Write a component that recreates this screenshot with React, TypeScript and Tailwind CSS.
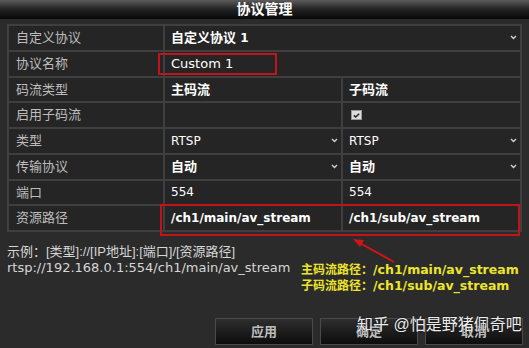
import React from 'react';

const cjk = '"Liberation Sans", "Noto Sans CJK SC", sans-serif';
const wide = '"DejaVu Sans", "Noto Sans CJK SC", sans-serif';

function Chevron() {
  return (
    <svg width="7" height="5" viewBox="0 0 7 5" className="shrink-0">
      <polyline points="1,1 3.5,3.5 6,1" fill="none" stroke="#d0d0d0" strokeWidth="1.4" />
    </svg>
  );
}

function Label({ children }: { children: React.ReactNode }) {
  return <div className="bg-[#252525] flex items-center pl-[7px] text-[13px] text-[#bdbdbd]">{children}</div>;
}

function Value({ children, chevron, span }: { children?: React.ReactNode; chevron?: boolean; span?: boolean }) {
  return (
    <div
      className={`bg-[#252525] flex items-center justify-between pl-[6px] pr-[3px] text-[12px] font-bold text-white ${span ? 'col-span-2' : ''}`}
      style={{ fontFamily: wide }}
    >
      <span>{children}</span>
      {chevron && <Chevron />}
    </div>
  );
}

function Cn({ children }: { children: React.ReactNode }) {
  return <span className="text-[13px]">{children}</span>;
}

function Checkbox() {
  return (
    <div className="w-[11px] h-[10px] bg-[#dcdcdc] border border-[#999] flex items-center justify-center">
      <svg width="7" height="5" viewBox="0 0 7 5">
        <polyline points="0.8,2.4 2.7,4 6.2,0.8" fill="none" stroke="#222" strokeWidth="1.5" />
      </svg>
    </div>
  );
}

function Button({ children }: { children: React.ReactNode }) {
  return (
    <div className="w-[98px] h-[27px] flex items-center justify-center border border-[#4a4a4a] bg-gradient-to-b from-[#2e2e2e] to-[#0d0d0d] text-[13px] text-[#bcbcbc] font-bold">
      {children}
    </div>
  );
}

export default function App() {
  return (
    <div className="relative w-[529px] h-[348px] bg-[#2b2b2b] overflow-hidden" style={{ fontFamily: cjk }}>
      <div className="h-[19px] bg-gradient-to-b from-[#5c5c5c] via-[#222] to-[#080808] flex items-center justify-center text-[14px] font-bold text-white">
        协议管理
      </div>

      <div className="mt-[5px] ml-[7px] w-[515px] grid grid-cols-[154px_176px_177px] auto-rows-[23.75px] gap-[2px] p-[2px] bg-[#3f3f3f]">
        <Label>自定义协议</Label>
        <Value span chevron>
          <Cn>自定义协议</Cn> 1
        </Value>
        <Label>协议名称</Label>
        <Value span>
          <span className="font-normal text-[13px]" style={{ fontFamily: wide }}>Custom 1</span>
        </Value>
        <Label>码流类型</Label>
        <Value>
          <Cn>主码流</Cn>
        </Value>
        <Value>
          <Cn>子码流</Cn>
        </Value>
        <Label>启用子码流</Label>
        <Value />
        <div className="bg-[#252525] flex items-center pl-[8px]">
          <Checkbox />
        </div>
        <Label>类型</Label>
        <Value chevron>
          <span className="font-normal">RTSP</span>
        </Value>
        <Value chevron>
          <span className="font-normal">RTSP</span>
        </Value>
        <Label>传输协议</Label>
        <Value chevron>
          <Cn>自动</Cn>
        </Value>
        <Value chevron>
          <Cn>自动</Cn>
        </Value>
        <Label>端口</Label>
        <Value>
          <span className="font-normal">554</span>
        </Value>
        <Value>
          <span className="font-normal">554</span>
        </Value>
        <Label>资源路径</Label>
        <Value>/ch1/main/av_stream</Value>
        <Value>/ch1/sub/av_stream</Value>
      </div>

      <div className="flex mt-[12px] ml-[7px]">
        <div className="w-[294px] shrink-0 text-[13px] leading-[16px] text-[#d6d6d6]">
          <div>示例：[类型]://[IP地址]:[端口]/[资源路径]</div>
          <div className="text-[13px]" style={{ fontFamily: wide }}>
            rtsp://192.168.0.1:554/ch1/main/av_stream
          </div>
        </div>
        <div className="mt-[18px] text-[12.5px] leading-[15px] font-bold text-[#ece52c]" style={{ fontFamily: wide }}>
          <div>
            <span className="text-[12px]">主码流路径：</span>/ch1/main/av_stream
          </div>
          <div>
            <span className="text-[12px]">子码流路径：</span>/ch1/sub/av_stream
          </div>
        </div>
      </div>

      <div className="absolute left-[215px] top-[318px] flex gap-[7px]">
        <Button>应用</Button>
        <Button>确定</Button>
        <Button>取消</Button>
      </div>

      {/* annotations */}
      <div className="absolute left-[158px] top-[53px] w-[119px] h-[22px] border-2 border-[#c0141a]" />
      <div className="absolute left-[160px] top-[204px] w-[360px] h-[32px] border-2 border-[#c0141a]" />
      <svg className="absolute left-0 top-0" width="529" height="348">
        <line x1="394" y1="262" x2="358" y2="242" stroke="#d0141a" strokeWidth="2" />
        <polygon points="353,239 364,240 360,247" fill="#d0141a" />
      </svg>

      <div className="absolute left-[357px] top-[313px] text-[16px] text-[#ececec] [text-shadow:0_0_2px_rgba(0,0,0,0.7)]">
        知乎 @怕是野猪佩奇吧
      </div>
    </div>
  );
}
